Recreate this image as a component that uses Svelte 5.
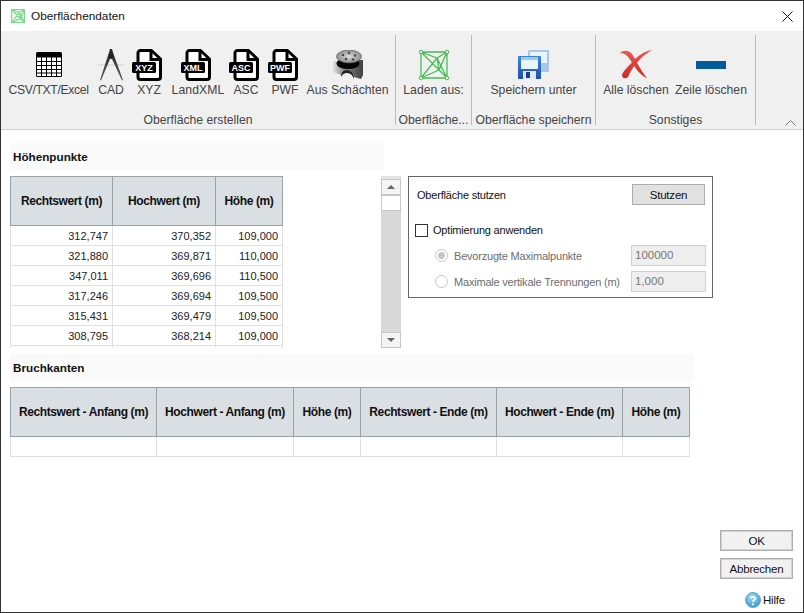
<script>
  const groups = [
    { label: 'Oberfläche erstellen', cls: 'g1', tools: [
      { t: 'CSV/TXT/Excel', w: 91, i: 'grid', ls: -0.35 }, { t: 'CAD', w: 34, i: 'cad' },
      { t: 'XYZ', w: 42, i: 'doc', d: 'XYZ' }, { t: 'LandXML', w: 56, i: 'doc', d: 'XML', ls: 0.1 },
      { t: 'ASC', w: 40, i: 'doc', d: 'ASC' }, { t: 'PWF', w: 38, i: 'doc', d: 'PWF' },
      { t: 'Aus Schächten', w: 87, i: 'shaft' } ] },
    { label: 'Oberfläche...', cls: 'g2', tools: [{ t: 'Laden aus:', w: 75, i: 'mesh' }] },
    { label: 'Oberfläche speichern', cls: 'g3', tools: [{ t: 'Speichern unter', w: 123, i: 'save' }] },
    { label: 'Sonstiges', cls: 'g4', tools: [{ t: 'Alle löschen', w: 72, i: 'x' }, { t: 'Zeile löschen', w: 78, i: 'minus' }] }
  ];
  const pts = [
    ['312,747', '370,352', '109,000'], ['321,880', '369,871', '110,000'], ['347,011', '369,696', '110,500'],
    ['317,246', '369,694', '109,500'], ['315,431', '369,479', '109,500'], ['308,795', '368,214', '109,000'],
    ['', '', '']
  ];
  const ptCols = [['Rechtswert (m)', 103], ['Hochwert (m)', 103], ['Höhe (m)', 67]];
  const brCols = [['Rechtswert - Anfang (m)', 147], ['Hochwert - Anfang (m)', 137], ['Höhe (m)', 67],
    ['Rechtswert - Ende (m)', 136], ['Hochwert - Ende (m)', 126], ['Höhe (m)', 67]];
  const cross = 'M3 3 L29 3 L29 29 L3 29 Z M3 3 L19 9 L29 3 M19 9 L29 29 M19 9 L21 21 M3 3 L21 21 L29 29 M21 21 L3 29 L19 9 M21 21 L29 3';
</script>

<div class="window">
  <header class="titlebar">
    <svg class="appicon" width="16" height="16" viewBox="0 0 32 32">
      <rect x="3" y="3" width="26" height="26" fill="#e8f7ea" />
      <path d={cross} fill="none" stroke="#7ed68a" stroke-width="2.2" />
    </svg>
    <span class="title">Oberflächendaten</span>
    <svg class="close" width="11" height="11" viewBox="0 0 11 11"><path d="M.5.5l10 10M10.5.5l-10 10" stroke="#111" fill="none" /></svg>
  </header>

  <nav class="ribbon">
    {#each groups as g}
      <section class="group {g.cls}">
        <div class="tools">
          {#each g.tools as tool}
            <div class="tool" style="width:{tool.w}px">
              <div class="ico">
                {#if tool.i === 'grid'}
                  <svg width="26" height="25" viewBox="0 0 26 25">
                    <rect width="26" height="25" rx="1.5" fill="#000" />
                    <path d="M1 5.500h24v18.500h-24z" fill="#fff" />
                    <path d="M0 9.500h26M0 13.500h26M0 17.500h26M0 21h26M5.500 5v20M10.500 5v20M15.500 5v20M20.500 5v20" stroke="#000" fill="none" />
                  </svg>
                {:else if tool.i === 'cad'}
                  <svg width="26" height="32" viewBox="0 0 26 32">
                    <defs><linearGradient id="leg" x1="0" y1="0" x2="0" y2="1"><stop offset="0" stop-color="#262626" /><stop offset="1" stop-color="#5e5e5e" /></linearGradient></defs>
                    <path d="M0 16h26" stroke="#cfcfcf" />
                    <path d="M12 0h2l1.500 5 9.500 26-1 .5L14 10h-2L3 31.500l-1-.5L10.500 5z" fill="url(#leg)" />
                    <circle cx="13" cy="7" r="2.400" fill="#222" />
                  </svg>
                {:else if tool.i === 'doc'}
                  <svg class="docicon" width="33" height="32" viewBox="0 0 33 32">
                    <path d="M9.500 1.500h11l9 8.500v18a2.500 2.500 0 0 1-2.500 2.500H9.500A2.500 2.500 0 0 1 7 28V4a2.500 2.500 0 0 1 2.500-2.500z" fill="#fff" stroke="#000" stroke-width="3" stroke-linejoin="round" />
                    <path d="M20 2v8.500h9" fill="none" stroke="#000" stroke-width="3" />
                    <rect x="1" y="13" width="24" height="11" rx="1.500" fill="#000" />
                    <text x="13" y="22" class="doctext" text-anchor="middle">{tool.d}</text>
                  </svg>
                {:else if tool.i === 'shaft'}
                  <svg width="32" height="30" viewBox="0 0 32 30">
                    <defs>
                      <linearGradient id="body" x1="0" y1="0" x2="1" y2="0"><stop offset="0" stop-color="#e2e2e2" /><stop offset=".35" stop-color="#8c8c8c" /><stop offset="1" stop-color="#3e3e3e" /></linearGradient>
                      <radialGradient id="lid"><stop offset="0" stop-color="#dcdcdc" /><stop offset="1" stop-color="#8f8f8f" /></radialGradient>
                    </defs>
                    <path d="M1 11 L1 22 L9 25 Q10 20 15 20 Q21 20 22 27 L29 29 L31 25 L31 10 Z" fill="url(#body)" />
                    <path d="M9 25 Q10 20 15 20 Q21 20 22 27 L22 29 Q20 23 15 23 Q11 23 9 27Z" fill="#222" />
                    <ellipse cx="16" cy="13.500" rx="11.500" ry="5.500" fill="#050505" />
                    <ellipse cx="17" cy="6.500" rx="12.500" ry="6.500" fill="url(#lid)" stroke="#5c5c5c" stroke-width=".7" />
                    <g fill="#4a4a4a"><circle cx="11" cy="5" r="1.300" /><circle cx="17" cy="3" r="1.300" /><circle cx="23" cy="5.500" r="1.300" /><circle cx="14" cy="9" r="1.300" /><circle cx="21" cy="9.500" r="1.300" /></g>
                  </svg>
                {:else if tool.i === 'mesh'}
                  <svg width="32" height="32" viewBox="0 0 32 32">
                    <path d={cross} fill="none" stroke="#47bd55" stroke-width="1.300" />
                    <g fill="#eef7ee" stroke="#47bd55"><circle cx="3" cy="3" r="1.800" /><circle cx="29" cy="3" r="1.800" /><circle cx="29" cy="29" r="1.800" /><circle cx="3" cy="29" r="1.800" /></g>
                  </svg>
                {:else if tool.i === 'save'}
                  <svg width="31" height="29" viewBox="0 0 31 29">
                    <defs><linearGradient id="fl" x1="0" y1="0" x2="0" y2="1"><stop offset="0" stop-color="#3f86d6" /><stop offset="1" stop-color="#1f4fa8" /></linearGradient></defs>
                    <rect x="10" y="0" width="21" height="22" rx="1" fill="#a9c7e6" />
                    <rect x="12" y="2" width="17" height="11" fill="#eaf2fa" />
                    <rect x="0" y="6" width="23" height="23" rx="1" fill="url(#fl)" />
                    <rect x="3" y="7" width="17" height="12" fill="#e9f4fb" />
                    <rect x="3" y="7" width="17" height="3" fill="#8ed0f0" />
                    <rect x="5" y="21" width="13" height="8" fill="#dfe9f5" />
                    <rect x="8" y="22" width="4" height="6" fill="#1d3f86" />
                  </svg>
                {:else if tool.i === 'x'}
                  <svg width="32" height="29" viewBox="0 0 32 29">
                    <defs><linearGradient id="red" x1="0" y1="0" x2="0" y2="1"><stop offset="0" stop-color="#e65b54" /><stop offset="1" stop-color="#cb2a25" /></linearGradient></defs>
                    <path d="M0 3 C3 0 9 0 12 4 C16 10 21 21 27 28 C21 26 15 18 11 11 C8 6 5 3 0 3Z" fill="url(#red)" />
                    <path d="M32 0 C25 1 19 5 14 10 C9 16 3 21 2 25 C2 29 6 29 8 27 C11 20 18 8 32 0Z" fill="url(#red)" />
                  </svg>
                {:else if tool.i === 'minus'}
                  <div class="bar"></div>
                {/if}
              </div>
              <span class="toollabel" style="letter-spacing:{tool.ls ?? 0}px">{tool.t}</span>
            </div>
          {/each}
        </div>
        <div class="grouplabel">{g.label}</div>
      </section>
    {/each}
    <svg class="chev" width="11" height="6" viewBox="0 0 11 6"><path d="M.5 5.500L5.500.5l5 5" fill="none" stroke="#777" /></svg>
  </nav>

  <main class="content">
    <h2 class="sec sec1">Höhenpunkte</h2>
    <div class="toprow">
      <div class="tablewrap">
        <table class="tbl">
          <colgroup>{#each ptCols as c}<col style="width:{c[1]}px" />{/each}</colgroup>
          <thead><tr>{#each ptCols as c}<th>{c[0]}</th>{/each}</tr></thead>
          <tbody>
            {#each pts as r}<tr>{#each r as v}<td>{v}</td>{/each}</tr>{/each}
          </tbody>
        </table>
      </div>
      <div class="scroll">
        <div class="sbtn up"><i class="arr a-up"></i></div>
        <div class="thumb"></div>
        <div class="track"></div>
        <div class="sbtn down"><i class="arr a-down"></i></div>
      </div>
      <div class="panel">
        <div class="prow first">
          <span>Oberfläche stutzen</span>
          <button class="btn stutzen">Stutzen</button>
        </div>
        <label class="check"><span class="box"></span>Optimierung anwenden</label>
        <div class="prow opt one">
          <span class="radio on"></span><span class="dim">Bevorzugte Maximalpunkte</span>
          <span class="inp">100000</span>
        </div>
        <div class="prow opt two">
          <span class="radio"></span><span class="dim">Maximale vertikale Trennungen (m)</span>
          <span class="inp">1,000</span>
        </div>
      </div>
    </div>

    <h2 class="sec sec2">Bruchkanten</h2>
    <table class="tbl wide">
      <colgroup>{#each brCols as c}<col style="width:{c[1]}px" />{/each}</colgroup>
      <thead><tr>{#each brCols as c}<th>{c[0]}</th>{/each}</tr></thead>
      <tbody><tr>{#each brCols as c}<td></td>{/each}</tr></tbody>
    </table>
  </main>

  <footer class="foot">
    <button class="btn act">OK</button>
    <button class="btn act">Abbrechen</button>
    <div class="help">
      <svg width="16" height="16" viewBox="0 0 16 16">
        <defs><radialGradient id="hb" cx=".4" cy=".3" r=".8"><stop offset="0" stop-color="#a6dcf5" /><stop offset="1" stop-color="#2f8fca" /></radialGradient></defs>
        <circle cx="8" cy="8" r="7.500" fill="url(#hb)" stroke="#5aa7d3" />
        <path d="M5.500 6.300C5.800 4.500 10.500 4.300 10.500 6.500 10.500 8.200 8 8 8 10" fill="none" stroke="#fff" stroke-width="1.800" />
        <circle cx="8" cy="12.300" r="1.100" fill="#fff" />
      </svg>
      <span>Hilfe</span>
    </div>
  </footer>
</div>

<style>
  :global(body) { margin: 0; background: #fff; }
  .window {
    width: 804px; height: 613px; box-sizing: border-box;
    border: 1px solid #333; background: #fff;
    display: flex; flex-direction: column; position: relative;
    font: 11px "Liberation Sans", Arial, sans-serif; letter-spacing: -0.2px; color: #111;
    overflow: hidden;
  }
  .titlebar { height: 30px; display: flex; align-items: center; padding-left: 9px; flex: none; }
  .appicon { margin-right: 5px; }
  .title { font-size: 11.8px; letter-spacing: 0; }
  .close { margin-left: auto; margin-right: 10px; }

  .ribbon {
    height: 98px; flex: none; background: #f0f0f0;
    border-bottom: 1px solid #cdcdcd; display: flex; position: relative;
  }
  .group { position: relative; display: flex; flex-direction: column; letter-spacing: 0; }
  .group::after {
    content: ""; position: absolute; right: 0; top: 4px; bottom: 4px; width: 1px; background: #b9b9b9;
  }
  .g1 { width: 395px; }
  .g2 { width: 76px; }
  .g3 { width: 124px; }
  .g4 { width: 160px; }
  .tools { display: flex; padding-left: 2px; height: 81px; }
  .g2 .tools, .g3 .tools { padding-left: 0; }
  .g4 .tools { padding-left: 4px; }
  .tool { display: flex; flex-direction: column; align-items: center; flex: none; }
  .ico { margin-top: 17px; display: flex; align-items: center; justify-content: center; height: 33px; }
  .toollabel { margin-top: 1px; color: #444; white-space: nowrap; font-size: 12.2px; line-height: 16px; }
  .grouplabel { text-align: center; color: #444; font-size: 12.2px; line-height: 16px; white-space: nowrap; padding-right: 1px; }
  .bar { width: 30px; height: 8px; background: #005a9c; }
  .doctext { font: bold 9px "Liberation Sans", Arial, sans-serif; fill: #fff; letter-spacing: 0; }
  .docicon { margin-left: -4px; }
  .chev { position: absolute; right: 7px; bottom: 3px; }

  .content { padding-left: 9px; flex: none; }
  .sec {
    margin: 0; height: 27px; line-height: 28px; background: #fafafa; box-sizing: border-box;
    padding-left: 3px; font-size: 11.7px; font-weight: bold; color: #111; letter-spacing: 0;
  }
  .sec1 { width: 374px; margin-top: 13px; margin-bottom: 6px; }
  .sec2 { width: 684px; margin-top: 6px; margin-bottom: 6px; }
  .toprow { display: flex; height: 172px; align-items: flex-start; }
  .tablewrap { width: 273px; height: 172px; overflow: hidden; flex: none; }
  .tbl { border-collapse: separate; border-spacing: 0; table-layout: fixed; width: 273px; }
  .tbl.wide { width: 680px; }
  th {
    height: 50px; box-sizing: border-box; background: #dadfe3; color: #111;
    font-size: 12px; font-weight: bold; padding: 0; text-align: center; letter-spacing: -0.4px;
    border-top: 1px solid #9aa2a8; border-bottom: 1px solid #9aa2a8; border-right: 1px solid #9aa2a8;
  }
  th:first-child { border-left: 1px solid #9aa2a8; }
  td {
    height: 20px; box-sizing: border-box; padding: 0 4px 0 0; text-align: right; letter-spacing: 0;
    font-size: 11px; color: #222; border-bottom: 1px solid #dde1e5; border-right: 1px solid #dde1e5;
  }
  td:first-child { border-left: 1px solid #dde1e5; }

  .scroll {
    margin-left: 98px; width: 20px; height: 172px; flex: none;
    display: flex; flex-direction: column; background: #d9d9d9; border-top: 3px solid #e3e3e3; box-sizing: border-box;
  }
  .sbtn { height: 16px; background: #f4f4f4; border: 1px solid #c6c6c6; box-sizing: border-box; display: flex; align-items: center; justify-content: center; flex: none; }
  .thumb { height: 16px; background: #fff; border: 1px solid #c6c6c6; box-sizing: border-box; flex: none; }
  .track { flex: 1; }
  .arr { width: 0; height: 0; border-left: 4px solid transparent; border-right: 4px solid transparent; }
  .a-up { border-bottom: 4px solid #666; }
  .a-down { border-top: 4px solid #666; }

  .panel {
    width: 305px; height: 122px; margin-left: 7px; box-sizing: border-box; border: 1px solid #666;
    padding: 7px 6px 0 8px; flex: none; background: #fff;
  }
  .prow { display: flex; align-items: center; }
  .first { height: 21px; justify-content: space-between; padding-right: 1px; }
  .btn { font: 11.500px "Liberation Sans", Arial, sans-serif; color: #111; padding: 0; letter-spacing: -0.2px; }
  .stutzen { width: 73px; height: 21px; background: #e1e1e1; border: 1px solid #adadad; }
  .check { display: flex; align-items: center; height: 14px; margin: 18px 0 0 -2px; }
  .box { width: 13px; height: 13px; box-sizing: border-box; border: 1px solid #333; background: #fff; margin-right: 5px; }
  .opt { height: 21px; padding-left: 18px; }
  .one { margin-top: 8px; }
  .two { margin-top: 5px; }
  .radio {
    width: 13px; height: 13px; box-sizing: border-box; border: 1px solid #c6c6c6; border-radius: 50%;
    margin-right: 6px; background: #fff; display: inline-block; flex: none; position: relative;
  }
  .radio.on::after {
    content: ""; position: absolute; left: 2px; top: 2px; width: 7px; height: 7px; border-radius: 50%; background: #c6c6c6;
  }
  .dim { color: #6d6d6d; white-space: nowrap; }
  .inp {
    margin-left: auto; width: 75px; height: 21px; box-sizing: border-box; background: #eeeeee;
    border: 1px solid #d0d0d0; color: #777; line-height: 19px; padding-left: 3px; font-size: 11.500px; letter-spacing: 0;
  }

  .foot { margin-top: auto; display: flex; flex-direction: column; align-items: flex-end; padding-right: 10px; padding-bottom: 4px; }
  .act {
    width: 73px; height: 21px; background: #f1f1f1; border: 1px solid #adadad;
    box-shadow: inset 0 0 0 1px #d2d2d2;
  }
  .act + .act { margin-top: 7px; }
  .help { display: flex; align-items: center; margin-top: 13px; margin-right: 8px; height: 16px; font-size: 11.500px; letter-spacing: -0.2px; }
  .help span { margin-left: 2px; }
</style>
